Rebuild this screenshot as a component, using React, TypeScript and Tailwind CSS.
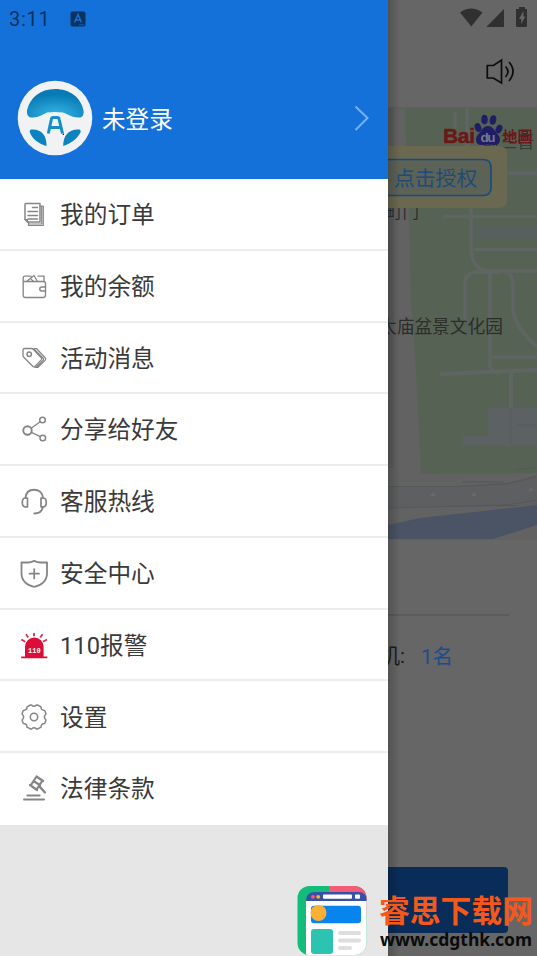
import type { ReactNode } from 'react'

const Icon = ({ children }: { children: ReactNode }) => (
  <svg
    viewBox="0 0 28 28"
    className="size-7 shrink-0"
    fill="none"
    stroke="#858585"
    strokeWidth="1.5"
    strokeLinecap="round"
    strokeLinejoin="round"
  >
    {children}
  </svg>
)

const menu = [
  {
    label: '我的订单',
    icon: (
      <Icon>
        <path d="M5.8 2.500H20v18.500H7.500L5 18.500V3.300q0-.8.8-.8z" />
        <path d="M5 18.500h2.500V21M20 5h3.300V24.500H8.500V21M21.700 5v18H9" strokeWidth="1.200" />
        <path d="M12.500 6.500h5M8 10.500h9.500M8 14.500h9.500M8 18h9.500" />
      </Icon>
    ),
  },
  {
    label: '我的余额',
    icon: (
      <Icon>
        <path d="M3.200 8.500h20.300q2 0 2 2V22q0 2.500-2.500 2.500H5.500q-2.300 0-2.300-2.300V5q0-1.800 1.800-1.800h6M6.500 8.500L14 2.500l3.500 6M18 3.200h6v5.300" strokeWidth="1.300" />
        <path d="M10.500 5.500l3 3" strokeWidth="1.200" />
        <path d="M25.500 14h-3.700a2 2 0 0 0 0 4h3.700" />
      </Icon>
    ),
  },
  {
    label: '活动消息',
    icon: (
      <Icon>
        <path d="M3 6.500q0-2 2-2h6.500q1 0 2 1l8 8.500q.8.800 0 1.600L15 22.500q-1 .8-2 0L4 13.500q-1-1-1-2z" strokeWidth="1.300" />
        <path d="M14 4.500h2.500l8.800 9.500q1 1.200 0 2.200L18 23.300h-3M14.500 5.500l8.800 9q.8.800 0 1.700L16.500 23" strokeWidth="1.200" />
        <circle cx="9.200" cy="10.300" r="2.200" />
      </Icon>
    ),
  },
  {
    label: '分享给好友',
    icon: (
      <Icon>
        <circle cx="7.500" cy="14.500" r="4.200" strokeWidth="1.900" />
        <circle cx="22.500" cy="4" r="2.800" />
        <circle cx="22.800" cy="22" r="2.800" />
        <path d="M11.200 12.200l9-6.500M11.400 16.400l9 4.300" strokeWidth="1.300" />
      </Icon>
    ),
  },
  {
    label: '客服热线',
    icon: (
      <Icon>
        <path d="M5.500 10C6 4.500 9.500 1.800 14 1.800S22.500 4.500 23 10M22.800 19c-.7 4-3.800 6.500-8.500 6.500" strokeWidth="1.900" />
        <path d="M7.500 10v8.800H5q-2.700-.5-2.700-4.400t2.700-4.400zM21 10v8.800h2.500q2.800-.5 2.800-4.400t-2.800-4.400z" strokeWidth="1.700" />
      </Icon>
    ),
  },
  {
    label: '安全中心',
    icon: (
      <Icon>
        <path d="M14.200 .9q3.500 1.600 6 1.600H27V13.500C27 20.500 21.500 25.800 14.200 26.800C7 25.800 1.500 20.500 1.500 13.500V2.500H8.200q2.500 0 6-1.600z" strokeWidth="1.800" />
        <path d="M14.200 9v9.500M9.500 13.700h9.500" strokeWidth="1.700" />
      </Icon>
    ),
  },
  {
    label: '110报警',
    icon: (
      <svg viewBox="0 0 28 28" className="size-7 shrink-0">
        <path d="M5 24.500V14.500a9.300 9 0 0 1 18.600 0v10h3.700V26.300H1.200v-1.800z" fill="#dc0d38" />
        <path d="M14 1v3.200M6 2.300l2.200 3.200M22.500 2.300l-2.200 3.200M1.300 7.500l4 2.300M27 7.500l-4 2.300" stroke="#e02a50" strokeWidth="1.800" fill="none" />
        <text x="14.300" y="20.800" textAnchor="middle" fill="#fff" fontSize="8" fontWeight="700" fontFamily="'Liberation Mono', monospace" textLength="12.500" lengthAdjust="spacingAndGlyphs">
          110
        </text>
      </svg>
    ),
  },
  {
    label: '设置',
    icon: (
      <Icon>
        <path d="M10.500 2h1q2.500 2.500 5 0h1L21 3.800q-.2 3.700 3.700 3.700l1.300 3.500q-3.300 3 0 6l-1.300 3.500q-3.900 0-3.700 3.700L17.500 26h-1q-2.500-2.500-5 0h-1L7 24.200q.2-3.700-3.700-3.700L2 17q3.300-3 0-6l1.300-3.500q3.900 0 3.700-3.700z" />
        <circle cx="14" cy="14" r="3.700" />
      </Icon>
    ),
  },
  {
    label: '法律条款',
    icon: (
      <Icon>
        <path d="M16.500 1.500l6.500 4.500M10 10l7 5M15.500 3l-4.500 7M21.500 7l-4.500 7M13.500 6l6.500 4.200" strokeWidth="2.200" />
        <path d="M19 11l6 6.500" strokeWidth="2.300" />
        <path d="M7.500 20.500h12" strokeWidth="2.200" />
        <path d="M4 24.500h20" strokeWidth="2" />
      </Icon>
    ),
  },
]

const Wheel = () => (
  <svg viewBox="0 0 76 76" className="size-[76px] shrink-0">
    <defs>
      <radialGradient id="glass" cx="0.5" cy="0.9" r="0.7">
        <stop offset="0" stopColor="#35b6e6" />
        <stop offset="1" stopColor="#087bb5" />
      </radialGradient>
    </defs>
    <circle cx="38" cy="38" r="37.300" fill="#f1f2f4" />
    <path d="M10 30.500C13 17.500 23 9 38 9s26 8.500 28.500 21.500c.7 5-1.500 7.500-5 7C54 37.500 51 34 46 32.500q-8-1.200-16 0C26 34 23 37.500 15.500 37.500 12 38 9.500 35.500 10 30.500z" fill="url(#glass)" />
    <path d="M14 49.500C24 48.500 30 55 29.500 66 21 63.500 15.500 59 12.800 52.500q-.6-2.500 1.200-3zM62.500 49.500C52.500 48.500 46 55 46.200 66 54 63.500 60 59 63.500 52.500q.8-2.500-1-3z" fill="#0b83be" />
    <path d="M31.300 53.500L34.300 39.500q.3-2 2-2h3.900q1.700 0 2 2L45.500 53.500M33 47.500h11" stroke="#168fc9" strokeWidth="3" fill="none" />
    <circle cx="46.300" cy="54.300" r="0.700" fill="#000" />
  </svg>
)

const StatusIcons = () => (
  <svg viewBox="0 0 149 40" className="h-10 w-[149px]" fill="#303030">
    <path d="M72 12.500Q83 4.500 94.500 12.500L83.300 26.500zM98.300 27L116 9v18z" />
    <path fillRule="evenodd" d="M131 7h6v2h2v16.500q0 1.500-1.500 1.500h-8q-1.500 0-1.500-1.500V9h3zM135.500 11l-4.500 8h2.300v5l4-7.500h-2z" />
  </svg>
)

const MapView = () => (
  <svg
    viewBox="388 107 149 433"
    className="block h-[433px] w-[149px]"
    fontFamily="'Noto Sans CJK SC', sans-serif"
  >
    <path d="M388 107h149v433H388z" fill="#616261" />
    <path d="M405 108H537V473L421 474Q417 370 411 300Q410 240 405 108z" fill="#566354" />
    <path d="M388 107h149v2H388z" fill="#5c605d" />
    <path d="M388 108h6v360h-6z" fill="#5b5c5d" />
    <g fill="none" stroke="#606564" strokeWidth="3.500">
      <path d="M467 108v60M455 112v16M443 216.500h94M471 160V246Q471 269 488 271h49M507 173h30M474 249.500h63M465 322V283Q465 273 476 272H500M490 272V368M504 272q8 0 9 13v25q3 20 26 38M491 357h46M490 366q2 7 9 7" />
      <path d="M440 374L537 370M511 373v36" strokeWidth="4" />
    </g>
    <path d="M474 226h63v14h-63z" fill="#596061" opacity="0.7" />
    <path d="M488 408h49v38h-74v-10h25z" fill="#5c6163" />
    <path d="M511 409v35M516 425h21" stroke="#575c5d" />
    <path d="M388 486h70l50-3 29-8v30l-30 2H388z" fill="#5d5f60" />
    <path d="M388 486.500h70l50-3 29-7M388 508l118-3 31-5M462 482h42M468 505.500h50M515 470l22-3" stroke="#565858" fill="none" />
    <path d="M430 496l3-4 3 4zM471 496l3-4 3 4zM528 491l3-4 3 4z" fill="#69696a" />
    <path d="M388 525L420 518 475 512 537 505V525L493 539H388z" fill="#4b5464" />
    <path d="M525 540q7-1 12 8z" fill="#566354" />

    <text x="482" y="147.500" fontSize="17.500" fill="#383b3a">前三晋</text>
    <text x="386" y="217.500" fontSize="16.500" fill="#2c2e2e">町门</text>

    <path d="M388 146h111q8 0 8 8v46q0 8-8 8H388z" fill="#6a6850" />
    <path d="M388 159.500h95q8 0 8 8v20q0 8-8 8h-95" fill="#5d6256" stroke="#174c7f" strokeWidth="1.700" />
    <text x="394" y="185.500" fontSize="20.800" fill="#1c4c7d">点击授权</text>
    <text x="379" y="333" fontSize="17.700" fill="#2b2d2b">太庙盆景文化园</text>

    <text x="443" y="142.500" fontSize="21" fontWeight="700" fontFamily="'Liberation Sans', sans-serif" fill="#6c1717" stroke="#6c1717" strokeWidth="0.500" textLength="32">Bai</text>
    <g fill="#1f1d66">
      <ellipse cx="478" cy="127.500" rx="3.200" ry="4.500" transform="rotate(-20 478 127.500)" />
      <ellipse cx="484.500" cy="119.500" rx="3.200" ry="4.800" />
      <ellipse cx="493" cy="120" rx="3.200" ry="4.800" transform="rotate(12 493 120)" />
      <ellipse cx="499" cy="129" rx="3.200" ry="4.500" transform="rotate(25 499 129)" />
      <path d="M488 126q4 0 7 5c2 3 5 5 5 8.500q0 5.500-6 5.500l-6-.5-6 .5q-6 0-6-5.500c0-3.500 3-5.500 5-8.500q3-5 7-5z" />
    </g>
    <text x="480.500" y="141.500" fontSize="13.500" fontWeight="700" fontFamily="'Liberation Sans', sans-serif" fill="#77778c" textLength="15">du</text>
    <text x="502.500" y="141.500" fontSize="15" fontWeight="700" fill="#6c1717">地圖</text>
  </svg>
)

const SiteLogo = () => (
  <svg viewBox="0 0 70 70" className="size-[70px]">
    <defs>
      <clipPath id="tile">
        <rect x="0.500" y="0" width="69" height="69" rx="12" />
      </clipPath>
    </defs>
    <g clipPath="url(#tile)">
      <path d="M0 0h70v70H0z" fill="#13bd79" />
      <path d="M32 0h38v30H32z" fill="#f55a78" />
      <path d="M9 14h61v56H9z" fill="#fff" />
      <path d="M9 15q0-9 9-9h43q9 0 9 9z" fill="#3651a6" />
      <circle cx="16" cy="10.800" r="1.900" fill="#f55a78" />
      <circle cx="21.200" cy="10.800" r="1.900" fill="#fbb034" />
      <rect x="26" y="8.600" width="29" height="4.200" rx="1" fill="#fff" />
      <rect x="58" y="8.600" width="5" height="4.200" rx="1" fill="#fff" />
      <rect x="14" y="19.700" width="50" height="17.500" rx="3" fill="#0884ef" />
      <circle cx="21.500" cy="27" r="8" fill="#fbb034" />
      <rect x="14" y="43" width="22" height="25" rx="3" fill="#2dc3b1" />
      <g fill="#dedede">
        <rect x="41" y="45" width="23" height="4" rx="2" />
        <rect x="41" y="52.500" width="23" height="4" rx="2" />
        <rect x="41" y="60" width="14" height="4" rx="2" />
      </g>
    </g>
  </svg>
)

export default function App() {
  return (
    <div className="relative flex h-[956px] w-[537px] overflow-hidden bg-[#666] font-['Roboto','Noto_Sans_CJK_SC',sans-serif]">
      <aside className="flex w-[388px] shrink-0 flex-col bg-[#e6e6e6]">
        <header className="h-[179px] bg-[#1571da]">
          <div className="flex h-[38px] items-center pl-[9px] text-[#0a3360]">
            <span className="w-[61px] text-[20px] tracking-[0.7px]">3:11</span>
            <svg viewBox="0 0 16 16" className="size-4">
              <rect x="0.500" y="0.500" width="15" height="15" rx="2" fill="#0a3360" />
              <path d="M4.500 11.500L8 3.500l3.500 8M5.500 9h5" stroke="#1571da" strokeWidth="1.500" fill="none" />
              <path d="M9 13.800h5" stroke="#1571da" strokeWidth="0.700" />
            </svg>
          </div>
          <div className="mt-[42px] flex h-[76px] items-center pr-[18px] pl-[17px]">
            <Wheel />
            <span className="ml-[9px] flex-1 pt-1.5 text-[23.6px] text-white">未登录</span>
            <svg viewBox="0 0 16 26" className="h-[26px] w-4" fill="none" stroke="#76b0f3" strokeWidth="2">
              <path d="M1.500 1.500L13.500 13 1.500 25" />
            </svg>
          </div>
        </header>
        <nav className="flex h-[646px] flex-col bg-white">
          {menu.map((item) => (
            <div key={item.label} className="flex flex-1 items-center border-b-2 border-[#ededed] pt-0.5 pl-5 last:border-white">
              {item.icon}
              <span className="ml-3 pt-0.5 text-[23.7px] text-[#3a3a3a]">{item.label}</span>
            </div>
          ))}
        </nav>
      </aside>

      <main className="flex min-w-0 flex-1 flex-col overflow-hidden">
        <div className="h-[107px]">
          <StatusIcons />
          <svg viewBox="0 0 30 28" className="mt-[17px] ml-[98px] h-7 w-[30px]" fill="none" stroke="#0c0c0c" strokeWidth="1.700">
            <path d="M1.300 8.500v12.500h6L15.500 26V3L7.500 8.500zM19.500 9.500q5 5 0 10.500M23 5q8 9 0 19" />
          </svg>
        </div>
        <MapView />
        <div className="mr-7 h-[76px] border-b-2 border-[#5b5b5b]" />
        <div className="flex h-20 items-center pt-0.5 text-[21px]">
          <span className="-ml-[9px] text-[#1c1c1c]">机:</span>
          <span className="ml-4 text-[20.5px] text-[#1b4d8c]">1名</span>
        </div>
        <div className="mt-[171px] mr-[29px] h-[66px] rounded-r-[4px] bg-[#092d58]" />
      </main>

      <div className="pointer-events-none absolute inset-y-0 left-[388px] w-3 bg-linear-to-r from-black/20 to-transparent" />
      <div className="absolute right-0 bottom-0 flex w-[240px] items-end">
        <SiteLogo />
        <div className="ml-[12px] h-[67px] whitespace-nowrap">
          <div className="font-['Noto_Sans_CJK_SC',sans-serif] text-[30.8px] leading-[40px] font-bold text-[#f4581a]">睿思下载网</div>
          <div className="-mt-0.5 ml-px font-['Noto_Sans',sans-serif] text-[17.5px] leading-6 font-bold text-[#0b0b0b]">www.cdgthk.com</div>
        </div>
      </div>
    </div>
  )
}
